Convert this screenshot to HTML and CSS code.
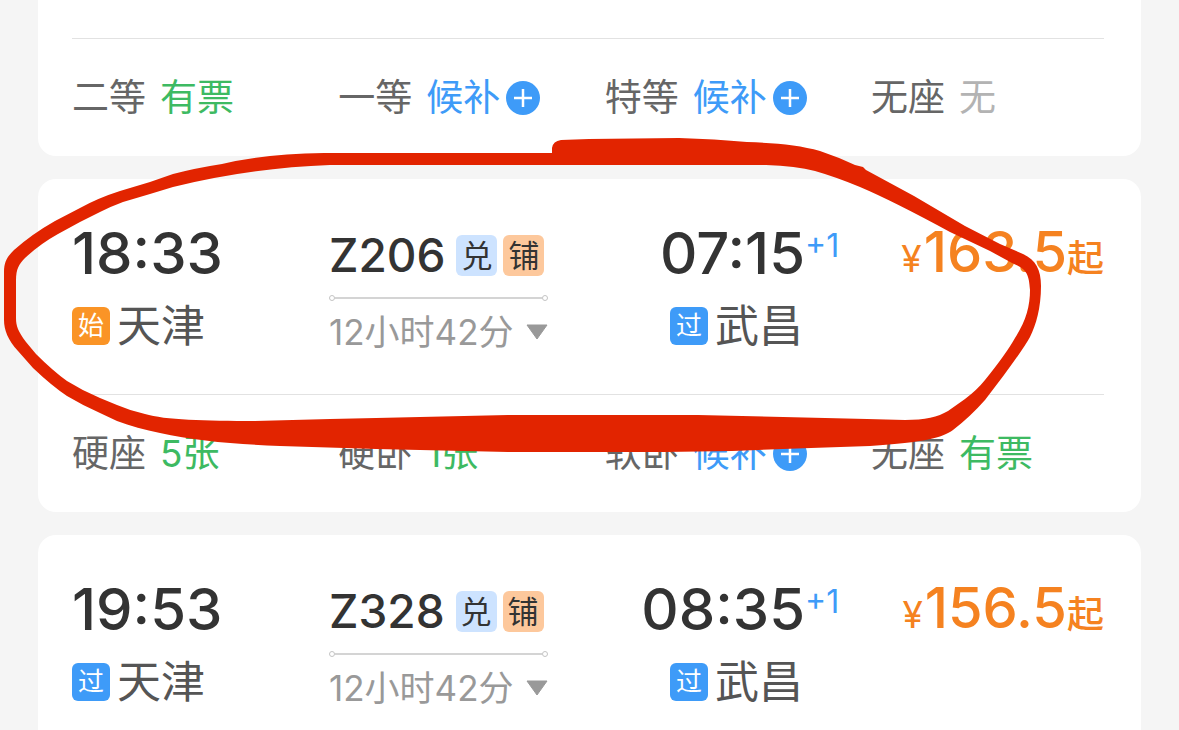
FILE: index.html
```html
<!DOCTYPE html>
<html lang="zh-CN">
<head>
    <meta charset="UTF-8">
    <title>车次列表</title>
    <link rel="stylesheet" href="styles.css">
</head>
<body>
    <svg class="symbols" aria-hidden="true">
        <symbol id="plus" viewBox="0 0 34 34">
            <circle cx="17" cy="17" r="17" fill="#3e9bf8"/>
            <path d="M17 8V26M8 17H26" stroke="#fff" stroke-width="2.5"/>
        </symbol>
        <symbol id="arrow" viewBox="0 0 22 16">
            <path d="M1 1H21L11 15Z" fill="#999" stroke="#999" stroke-width="1" stroke-linejoin="round"/>
        </symbol>
    </svg>

    <main class="list">
        <section class="card card-first">
            <div class="seats">
                <div class="seat">二等 <span class="ok">有票</span></div>
                <div class="seat">一等 <button class="wait">候补<svg class="plus"><use href="#plus"/></svg></button></div>
                <div class="seat">特等 <button class="wait">候补<svg class="plus"><use href="#plus"/></svg></button></div>
                <div class="seat">无座 <span class="none">无</span></div>
            </div>
        </section>

        <section class="card">
            <div class="trip">
                <div class="stop">
                    <div class="time">18:33</div>
                    <div class="station"><span class="mark mark-start">始</span>天津</div>
                </div>
                <div class="route">
                    <div class="train">Z206 <span class="tag tag-blue">兑</span><span class="tag tag-orange">铺</span></div>
                    <div class="line"></div>
                    <button class="duration">12小时42分<svg class="arrow"><use href="#arrow"/></svg></button>
                </div>
                <div class="stop stop-end">
                    <div class="time">07:15<span class="day">+1</span></div>
                    <div class="station"><span class="mark">过</span>武昌</div>
                </div>
                <div class="price"><span class="yen">¥</span>163.5<span class="from">起</span></div>
            </div>
            <div class="seats">
                <div class="seat">硬座 <span class="ok">5张</span></div>
                <div class="seat">硬卧 <span class="ok">1张</span></div>
                <div class="seat">软卧 <button class="wait">候补<svg class="plus"><use href="#plus"/></svg></button></div>
                <div class="seat">无座 <span class="ok">有票</span></div>
            </div>
        </section>

        <section class="card card-last">
            <div class="trip">
                <div class="stop">
                    <div class="time">19:53</div>
                    <div class="station"><span class="mark">过</span>天津</div>
                </div>
                <div class="route">
                    <div class="train">Z328 <span class="tag tag-blue">兑</span><span class="tag tag-orange">铺</span></div>
                    <div class="line"></div>
                    <button class="duration">12小时42分<svg class="arrow"><use href="#arrow"/></svg></button>
                </div>
                <div class="stop stop-end">
                    <div class="time">08:35<span class="day">+1</span></div>
                    <div class="station"><span class="mark">过</span>武昌</div>
                </div>
                <div class="price"><span class="yen">¥</span>156.5<span class="from">起</span></div>
            </div>
        </section>

        <!-- hand-drawn marker around the Z206 train -->
        <svg class="marker" viewBox="0 0 1179 730" preserveAspectRatio="none" aria-hidden="true">
            <path fill="#e22400" fill-rule="evenodd" d="M552 153V148Q553 141 561 140L589 139L679 138Q715 139 747 142C775 143 800 145 820 151Q838 157 855 165L863 167L866 170L914 196L965 226L1000 244L1023 254C1036 260 1041 270 1041 286C1041 308 1036 325 1030 337Q1024 348 1004 375L985 400Q970 417 953 430C942 438 925 442 870 446L811 448L732 451L664 452H508L376 449L280 446C235 444 195 441 160 433C145 430 130 426 117 421L100 413Q82 405 67 396Q52 386 33 368L18 351C8 340 4 330 4 320V272C4 261 8 256 14 250Q32 234 55 221L80 208Q98 198 120 191L150 182L173 174Q196 168 222 164Q263 154 324 153Z
            M330 165H766Q796 166 815 171Q836 177 860 187Q893 201 950 232L990 251L1012 263C1026 269 1029 273 1030 290C1030 306 1026 321 1015 338Q1006 354 985 380Q977 390 965 399L948 411C938 417 925 420 905 420L867 419L698 415H508L376 418L330 419L255 421C205 421 165 420 145 414Q131 411 117 405L100 398Q83 391 67 381Q53 371 36 354L26 342C18 331 16 326 16 318V280C16 269 19 264 25 258Q40 244 58 234L80 222L100 212Q112 206 123 202L150 194L173 187Q250 168 330 165Z"/>
        </svg>
    </main>
</body>
</html>
```
FILE: styles.css
```css
* {
    box-sizing: border-box;
}

body {
    margin: 0;
    background: #f5f5f5;
    color: #333;
    font-family: Inter, "Noto Sans CJK SC", sans-serif;
}

button {
    padding: 0;
    border: none;
    background: none;
    font: inherit;
    cursor: pointer;
}

.symbols {
    position: absolute;
    width: 0;
    height: 0;
}

.list {
    position: relative;
    height: 100vh;
    padding: 0 38px;
    overflow: hidden;
}

.marker {
    position: absolute;
    top: 0;
    left: 0;
    width: 100%;
    height: 730px;
    pointer-events: none;
}

/* Cards */
.card {
    margin-bottom: 23px;
    padding: 0 37px 0 34px;
    border-radius: 18px;
    background: #fff;
}

.card-first {
    padding-top: 38px;
    border-radius: 0 0 18px 18px;
}

.card-last {
    height: 334px;
}

/* Seats */
.seats {
    display: grid;
    grid-template-columns: repeat(3, 8fr) 7fr;
    height: 118px;
    border-top: 1px solid #e2e2e2;
    align-items: center;
}

.seat {
    display: flex;
    gap: 14px;
    align-items: center;
    color: #666;
    font-size: 37px;
    line-height: 48px;
    white-space: nowrap;
}

.ok {
    color: #3dba62;
}

.none {
    color: #b3b3b3;
}

.wait {
    display: flex;
    gap: 6px;
    align-items: center;
    color: #3e9bf8;
}

.plus {
    width: 34px;
    height: 34px;
}

/* Trip */
.trip {
    display: grid;
    grid-template-columns: 257fr 219fr 257fr 299fr;
    height: 215px;
    padding-top: 39px;
}

.time {
    position: relative;
    font-size: 58px;
    font-weight: 500;
    line-height: 70px;
}

.station {
    display: flex;
    gap: 7px;
    align-items: center;
    margin-top: 8px;
    color: #555;
    font-size: 44px;
    line-height: 60px;
}

.mark {
    width: 38px;
    height: 38px;
    border-radius: 6px;
    background: #3e9bf8;
    color: #fff;
    font-size: 26px;
    line-height: 38px;
    text-align: center;
}

.mark-start {
    background: #fa9426;
}

.stop-end {
    display: flex;
    flex-direction: column;
    align-items: flex-end;
}

.stop-end .station {
    margin-right: 2px;
}

.day {
    position: absolute;
    top: 8px;
    left: 100%;
    color: #3e9bf8;
    font-size: 32px;
    font-weight: 400;
    line-height: 40px;
}

.train {
    display: flex;
    gap: 6px;
    align-items: center;
    font-size: 46px;
    font-weight: 500;
    line-height: 74px;
    white-space: nowrap;
}

.tag {
    width: 41px;
    height: 41px;
    border-radius: 6px;
    font-size: 31px;
    font-weight: 400;
    line-height: 41px;
    text-align: center;
}

.tag-blue {
    margin-left: 5px;
    background: #cde3ff;
}

.tag-orange {
    background: #fdc89c;
}

/* line with a small ring at each end */
.line {
    display: flex;
    justify-content: space-between;
    align-items: center;
    height: 12px;
    background: linear-gradient(#d4d4d4, #d4d4d4) center / calc(100% - 12px) 2px no-repeat;
}

.line::before,
.line::after {
    content: "";
    box-sizing: border-box;
    width: 6px;
    height: 6px;
    border: 1px solid #c4c4c4;
    border-radius: 50%;
}

.duration {
    display: flex;
    gap: 12px;
    align-items: center;
    margin-top: 3px;
    color: #999;
    font-size: 35px;
    line-height: 50px;
    white-space: nowrap;
}

.arrow {
    width: 22px;
    height: 16px;
}

.price {
    color: #f58220;
    font-size: 56px;
    font-weight: 500;
    line-height: 68px;
    text-align: right;
    white-space: nowrap;
}

.yen {
    margin-right: 2px;
    font-size: 37px;
    font-weight: 400;
}

.from {
    font-size: 37px;
}
```
